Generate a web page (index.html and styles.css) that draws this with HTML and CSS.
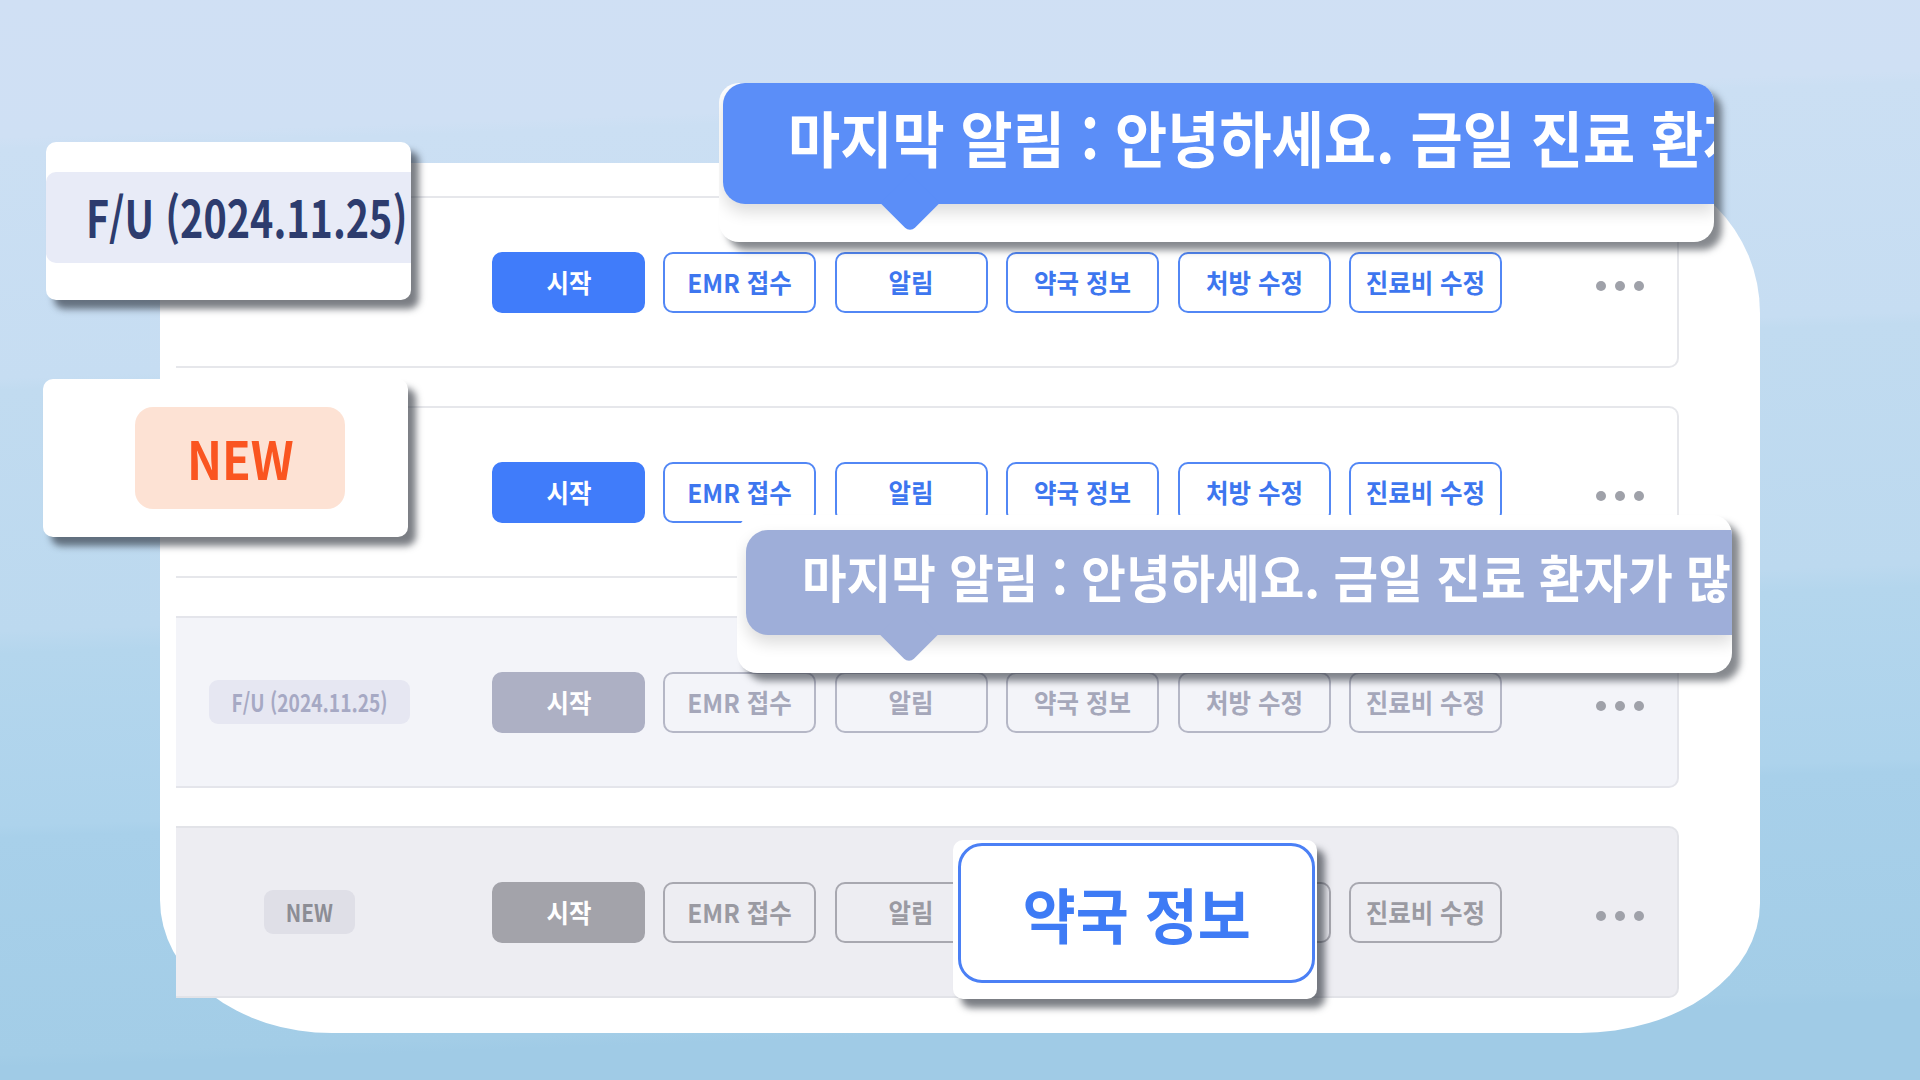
FILE: index.html
```html
<!DOCTYPE html>
<html lang="ko">
<head>
<meta charset="utf-8">
<title>진료 목록</title>
<link rel="stylesheet" href="styles.css">
</head>
<body>
<div class="stage">
  <section class="panel">
    <div class="row row-active">
      <div class="label"></div>
      <div class="actions">
        <button class="btn btn-fill"><span class="sq">시작</span></button>
        <button class="btn"><span class="sq">EMR 접수</span></button>
        <button class="btn"><span class="sq">알림</span></button>
        <button class="btn"><span class="sq">약국 정보</span></button>
        <button class="btn"><span class="sq">처방 수정</span></button>
        <button class="btn"><span class="sq">진료비 수정</span></button>
      </div>
      <div class="dots"><i></i><i></i><i></i></div>
    </div>
    <div class="row row-active">
      <div class="label"></div>
      <div class="actions">
        <button class="btn btn-fill"><span class="sq">시작</span></button>
        <button class="btn"><span class="sq">EMR 접수</span></button>
        <button class="btn"><span class="sq">알림</span></button>
        <button class="btn"><span class="sq">약국 정보</span></button>
        <button class="btn"><span class="sq">처방 수정</span></button>
        <button class="btn"><span class="sq">진료비 수정</span></button>
      </div>
      <div class="dots"><i></i><i></i><i></i></div>
    </div>
    <div class="row row-muted">
      <div class="label"><span class="badge badge-fu"><span class="sq">F/U (2024.11.25)</span></span></div>
      <div class="actions">
        <button class="btn btn-fill"><span class="sq">시작</span></button>
        <button class="btn"><span class="sq">EMR 접수</span></button>
        <button class="btn"><span class="sq">알림</span></button>
        <button class="btn"><span class="sq">약국 정보</span></button>
        <button class="btn"><span class="sq">처방 수정</span></button>
        <button class="btn"><span class="sq">진료비 수정</span></button>
      </div>
      <div class="dots"><i></i><i></i><i></i></div>
    </div>
    <div class="row row-gray">
      <div class="label"><span class="badge badge-new"><span class="sq">NEW</span></span></div>
      <div class="actions">
        <button class="btn btn-fill"><span class="sq">시작</span></button>
        <button class="btn"><span class="sq">EMR 접수</span></button>
        <button class="btn"><span class="sq">알림</span></button>
        <button class="btn"><span class="sq">약국 정보</span></button>
        <button class="btn"><span class="sq">처방 수정</span></button>
        <button class="btn"><span class="sq">진료비 수정</span></button>
      </div>
      <div class="dots"><i></i><i></i><i></i></div>
    </div>
  </section>

  <div class="zoom-card zoom-fu">
    <div class="fu-band"><span class="sq sq-left">F/U (2024.11.25)</span></div>
  </div>

  <div class="zoom-card zoom-new">
    <div class="new-pill"><span class="sq">NEW</span></div>
  </div>

  <div class="tip tip-blue">
    <div class="bubble"><span class="sq sq-left">마지막 알림 : 안녕하세요. 금일 진료 환자가 많습니다.</span></div>
    <div class="arrow"></div>
  </div>

  <div class="tip tip-gray">
    <div class="bubble"><span class="sq sq-left">마지막 알림 : 안녕하세요. 금일 진료 환자가 많습니다.</span></div>
    <div class="arrow"></div>
  </div>

  <div class="zoom-card zoom-pharm">
    <div class="pharm-box"><span class="sq">약국 정보</span></div>
  </div>
</div>
</body>
</html>
```

FILE: styles.css
```css
* { box-sizing: border-box; }

html, body {
  margin: 0;
  padding: 0;
}

body {
  width: 1920px;
  height: 1080px;
  overflow: hidden;
  font-family: "Noto Sans CJK KR", "Noto Sans", sans-serif;
  background: linear-gradient(178deg,
    #d0e0f4 0%, #cfe0f4 12%, #cbdff3 13%, #c6ddf2 33%,
    #c1dbf0 34%, #bcd9ef 55%, #b4d6ed 57%, #add3ec 72%,
    #a8d0ea 73%, #a3cde7 92%, #a0cbe6 93%, #a0cbe6 100%);
}

.stage {
  position: relative;
  width: 1920px;
  height: 1080px;
  padding-top: 163px;
  padding-left: 160px;
}

.sq {
  display: inline-block;
  transform: scaleX(0.9);
  white-space: nowrap;
}
.sq-left { transform-origin: left center; }

/* ---------- panel ---------- */
.panel {
  width: 1600px;
  height: 870px;
  background: #ffffff;
  border-radius: 0 150px 180px 172px / 0 150px 130px 133px;
  padding: 33px 81px 34px 16px;
  display: flex;
  flex-direction: column;
  gap: 38px;
}

.row {
  height: 172px;
  display: flex;
  align-items: center;
  border: 2px solid #e6e7eb;
  border-left: none;
  border-radius: 0 10px 10px 0;
  background: #ffffff;
}

.label {
  width: 267px;
  display: flex;
  justify-content: center;
  align-items: center;
}

.actions {
  margin-left: 49px;
  display: flex;
  gap: 18.4px;
}

.btn {
  width: 153px;
  height: 61px;
  border: 2px solid #5287f5;
  border-radius: 10px;
  background: #ffffff;
  color: #3d76ef;
  font-family: "Noto Sans CJK KR", "Noto Sans", sans-serif;
  font-weight: 700;
  font-size: 26px;
  line-height: 1;
  padding: 0;
  display: flex;
  align-items: center;
  justify-content: center;
}
.btn .sq { transform: scaleX(0.94); }

.btn-fill {
  background: #407cfa;
  border-color: #407cfa;
  color: #ffffff;
}

.dots {
  margin-left: 94px;
  margin-top: 8px;
  display: flex;
  gap: 9px;
}
.dots i {
  width: 10px;
  height: 10px;
  border-radius: 50%;
  background: #9fa1a9;
}

.row-muted {
  background: #f3f4f9;
  border-color: #e4e5eb;
}
.row-muted .btn {
  background: #f3f4f9;
  border-color: #b5b7c6;
  color: #a5a7ba;
}
.row-muted .btn-fill {
  background: #adb0c4;
  border-color: #adb0c4;
  color: #ffffff;
}

.row-gray {
  background: #ededf2;
  border-color: #e2e3e8;
}
.row-gray .btn {
  background: #ededf2;
  border-color: #a8a8b0;
  color: #9a9aa2;
}
.row-gray .btn-fill {
  background: #a3a3aa;
  border-color: #a3a3aa;
  color: #ffffff;
}

.badge {
  display: flex;
  align-items: center;
  justify-content: center;
  height: 44px;
  border-radius: 9px;
  font-weight: 700;
  font-size: 24px;
  line-height: 1;
}
.badge-fu {
  width: 201px;
  background: #e6e7f2;
  color: #a6a9c4;
}
.badge-fu .sq { transform: scaleX(0.8); }
.badge-new {
  width: 91px;
  background: #dfdfe7;
  color: #8c8d95;
}
.badge-new .sq { transform: scaleX(0.86); }

/* ---------- magnified cards ---------- */
.zoom-card {
  position: absolute;
  background: #ffffff;
  border-radius: 10px;
  box-shadow: 8px 9px 7px rgba(35, 40, 50, 0.6);
  overflow: hidden;
}

.zoom-fu {
  left: 46px;
  top: 142px;
  width: 365px;
  height: 158px;
  padding-top: 30px;
}
.fu-band {
  height: 91px;
  background: #e8ebf7;
  border-radius: 10px 0 0 10px;
  display: flex;
  align-items: center;
  padding-left: 40px;
  padding-bottom: 3px;
  color: #2d3c6e;
  font-weight: 700;
  font-size: 51px;
  line-height: 1;
  white-space: nowrap;
}
.fu-band .sq { transform: scaleX(0.775); }

.zoom-new {
  left: 43px;
  top: 379px;
  width: 365px;
  height: 158px;
  padding: 28px 0 0 92px;
}
.new-pill {
  width: 210px;
  height: 102px;
  border-radius: 18px;
  background: #fde2d4;
  color: #fa5520;
  font-weight: 700;
  font-size: 52px;
  line-height: 1;
  display: flex;
  align-items: center;
  justify-content: center;
}

.zoom-pharm {
  left: 953px;
  top: 840px;
  width: 364px;
  height: 159px;
  padding: 3px 2px 16px 5px;
}
.pharm-box {
  width: 100%;
  height: 100%;
  border: 3px solid #4b80f5;
  border-radius: 24px;
  color: #3e7bf5;
  font-weight: 700;
  font-size: 60px;
  line-height: 1;
  display: flex;
  align-items: center;
  justify-content: center;
}
.pharm-box .sq { transform: scaleX(0.96); }

/* ---------- tooltips ---------- */
.tip {
  position: absolute;
  width: 995px;
  background: #ffffff;
  border-radius: 20px;
  box-shadow: 8px 8px 7px rgba(35, 40, 50, 0.55);
  overflow: hidden;
}
.tip .bubble {
  position: relative;
  z-index: 1;
  margin-left: 4px;
  border-radius: 22px 0 0 22px;
  color: #ffffff;
  font-weight: 700;
  line-height: 1;
  display: flex;
  align-items: center;
  white-space: nowrap;
  overflow: hidden;
  box-shadow: 0 8px 16px rgba(0, 0, 0, 0.14);
}
.tip .arrow {
  position: absolute;
  z-index: 2;
  width: 42px;
  height: 42px;
  transform: rotate(45deg);
  border-bottom-right-radius: 7px;
}

.tip-blue {
  left: 719px;
  top: 83px;
  height: 159px;
}
.tip-blue .bubble {
  height: 121px;
  background: #5b8ef8;
  padding-left: 65px;
  padding-bottom: 14px;
  font-size: 61px;
}
.tip-blue .bubble .sq { transform: scaleX(0.93); }
.tip-blue .arrow {
  left: 170px;
  top: 99px;
  background: #5b8ef8;
}

.tip-gray {
  left: 737px;
  top: 515px;
  height: 158px;
  padding-top: 15px;
}
.tip-gray .bubble {
  margin-left: 9px;
  height: 105px;
  background: #9eaed9;
  padding-left: 56px;
  padding-bottom: 12px;
  font-size: 51px;
}
.tip-gray .bubble .sq { transform: scaleX(0.95); }
.tip-gray .arrow {
  left: 151px;
  top: 98px;
  background: #9eaed9;
}
```
